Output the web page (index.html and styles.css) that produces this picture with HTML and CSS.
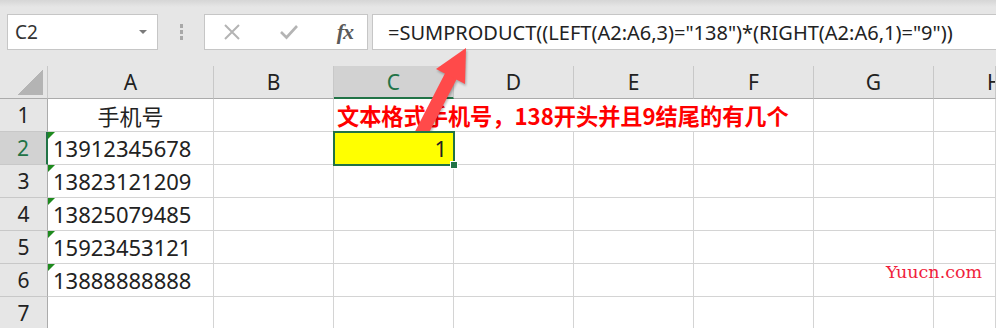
FILE: index.html
```html
<!DOCTYPE html>
<html lang="zh-CN">
<head>
    <meta charset="UTF-8" />
    <link rel="stylesheet" href="styles.css">
</head>
<body>

<div class="toolbar">
    <div class="namebox">
        <span class="ref">C2</span>
        <span class="caret"></span>
    </div>
    <div class="grip"><i></i><i></i><i></i></div>
    <div class="fbuttons">
        <svg class="btn" width="20" height="20" viewBox="0 0 20 20">
            <path d="M3 3 L17 17 M17 3 L3 17" stroke="#b4b4b4" stroke-width="2" fill="none" />
        </svg>
        <svg class="btn" width="20" height="20" viewBox="0 0 20 20">
            <path d="M2 10 L7.5 15.5 L18 4" stroke="#b4b4b4" stroke-width="2.6" fill="none" />
        </svg>
        <span class="fx">fx</span>
    </div>
    <div class="formula">=SUMPRODUCT((LEFT(A2:A6,3)="138")*(RIGHT(A2:A6,1)="9"))</div>
</div>

<div class="sheet">
    <div class="corner"></div>
    <div class="colhead">A</div>
    <div class="colhead">B</div>
    <div class="colhead active">C</div>
    <div class="colhead">D</div>
    <div class="colhead">E</div>
    <div class="colhead">F</div>
    <div class="colhead">G</div>
    <div class="colhead last">H</div>

    <div class="rowhead">1</div>
    <div class="cell center">手机号</div>
    <div class="cell"></div>
    <div class="cell note">文本格式手机号，138开头并且9结尾的有几个</div>
    <div class="cell"></div>
    <div class="cell"></div>

    <div class="rowhead active">2</div>
    <div class="cell txt">13912345678</div>
    <div class="cell"></div>
    <div class="cell selected">1</div>
    <div class="cell"></div>
    <div class="cell"></div>
    <div class="cell"></div>
    <div class="cell"></div>
    <div class="cell"></div>

    <div class="rowhead">3</div>
    <div class="cell txt">13823121209</div>
    <div class="cell"></div>
    <div class="cell"></div>
    <div class="cell"></div>
    <div class="cell"></div>
    <div class="cell"></div>
    <div class="cell"></div>
    <div class="cell"></div>

    <div class="rowhead">4</div>
    <div class="cell txt">13825079485</div>
    <div class="cell"></div>
    <div class="cell"></div>
    <div class="cell"></div>
    <div class="cell"></div>
    <div class="cell"></div>
    <div class="cell"></div>
    <div class="cell"></div>

    <div class="rowhead">5</div>
    <div class="cell txt">15923453121</div>
    <div class="cell"></div>
    <div class="cell"></div>
    <div class="cell"></div>
    <div class="cell"></div>
    <div class="cell"></div>
    <div class="cell"></div>
    <div class="cell"></div>

    <div class="rowhead">6</div>
    <div class="cell txt">13888888888</div>
    <div class="cell"></div>
    <div class="cell"></div>
    <div class="cell"></div>
    <div class="cell"></div>
    <div class="cell"></div>
    <div class="cell"></div>
    <div class="cell"></div>

    <div class="rowhead">7</div>
    <div class="cell"></div>
    <div class="cell"></div>
    <div class="cell"></div>
    <div class="cell"></div>
    <div class="cell"></div>
    <div class="cell"></div>
    <div class="cell"></div>
    <div class="cell"></div>
</div>

<!-- annotation arrow drawn over the sheet -->
<svg class="arrow" width="996" height="328" viewBox="0 0 996 328">
    <line x1="420" y1="136" x2="452" y2="74" stroke="#ff4a4a" stroke-width="13" stroke-linecap="round" />
    <polygon points="466,48 436,69 465,84" fill="#ff4a4a" />
</svg>

<div class="watermark">Yuucn.com</div>

</body>
</html>
```

FILE: styles.css
```css
body {
    margin: 0;
    width: 996px;
    height: 328px;
    overflow: hidden;
    position: relative;
    background-color: #ffffff;
    font-family: "Noto Sans", "Noto Sans CJK SC", sans-serif;
    color: #222222;
}

.toolbar {
    height: 66px;
    box-sizing: border-box;
    padding: 14px 0 0 7px;
    display: flex;
    align-items: flex-start;
    background: linear-gradient(#d6d6d6, #e6e6e6 7px, #e6e6e6);
}

.namebox,
.fbuttons,
.formula {
    height: 36px;
    box-sizing: border-box;
    background-color: #ffffff;
    border: 1px solid #c6c6c6;
    display: flex;
    align-items: center;
}

.namebox {
    width: 151px;
    padding: 0 10px 0 7px;
    justify-content: space-between;
}

.ref {
    font-size: 19px;
    color: #333333;
}

.caret {
    width: 0;
    height: 0;
    border-left: 4px solid transparent;
    border-right: 4px solid transparent;
    border-top: 4px solid #7a7a7a;
}

.grip {
    width: 46px;
    height: 36px;
    display: flex;
    flex-direction: column;
    align-items: center;
    justify-content: center;
    gap: 2px;
}

.grip i {
    width: 3px;
    height: 4px;
    background-color: #a8a8a8;
}

.fbuttons {
    width: 164px;
    padding: 0 14px 0 17px;
    justify-content: space-between;
}

.fx {
    font-family: "Liberation Serif", serif;
    font-style: italic;
    font-weight: bold;
    font-size: 22px;
    color: #5a5a5a;
    letter-spacing: -1px;
}

.formula {
    flex: 1;
    margin-left: 4px;
    padding-left: 15px;
    border-right: none;
    font-size: 20px;
    color: #222222;
    white-space: nowrap;
}

.sheet {
    display: grid;
    grid-template-columns: 48px 166px repeat(6, 120px) 62px;
    grid-auto-rows: 33px;
    background-color: #ffffff;
}

.corner,
.colhead,
.rowhead,
.cell {
    box-sizing: border-box;
    border-right: 1px solid #d4d4d4;
    border-bottom: 1px solid #d4d4d4;
    display: flex;
    align-items: center;
    white-space: nowrap;
}

.corner {
    background: linear-gradient(135deg, #e6e6e6 50%, #b4b4b4 50%) no-repeat 18px 4px / 25px 25px, #e6e6e6;
    border-right-color: #c8c8c8;
    border-bottom-color: #ababab;
}

.colhead {
    background-color: #e6e6e6;
    border-right-color: #c8c8c8;
    border-bottom-color: #ababab;
    justify-content: center;
    font-size: 21px;
}

/* column H runs off the window, only its first letter stroke shows */
.colhead.last {
    justify-content: flex-start;
    padding-left: 53px;
    overflow: hidden;
}

.colhead.active {
    background-color: #d2d2d2;
    color: #217346;
    border-bottom: 2px solid #217346;
}

.rowhead {
    background-color: #e6e6e6;
    border-right-color: #ababab;
    border-bottom-color: #c8c8c8;
    justify-content: center;
    font-size: 21px;
}

.rowhead.active {
    background-color: #d2d2d2;
    color: #217346;
    border-right: 2px solid #217346;
}

.cell {
    font-size: 22px;
    padding-left: 5px;
    position: relative;
}

.center {
    justify-content: center;
    padding-left: 0;
}

.txt::before {
    content: "";
    position: absolute;
    top: 0;
    left: 0;
    border-top: 7px solid #1e8a1e;
    border-right: 7px solid transparent;
}

.note {
    grid-column: span 4;
    padding-left: 3px;
    font-family: "Noto Sans CJK SC", sans-serif;
    font-weight: bold;
    font-size: 22.2px;
    color: #ff0000;
}

.selected {
    background-color: #ffff00;
    justify-content: flex-end;
    padding-right: 6px;
    outline: 2px solid #217346;
    outline-offset: -1px;
    z-index: 1;
}

.selected::after {
    content: "";
    position: absolute;
    right: -5px;
    bottom: -5px;
    width: 6px;
    height: 6px;
    background-color: #217346;
    border: 1px solid #ffffff;
}

.arrow {
    position: absolute;
    top: 0;
    left: 0;
    pointer-events: none;
    filter: drop-shadow(1px 2px 1px rgba(0, 0, 0, 0.25));
}

.watermark {
    position: absolute;
    left: 886px;
    top: 262px;
    font-family: "DejaVu Serif", serif;
    font-size: 17.5px;
    color: #f01e3c;
}
```
